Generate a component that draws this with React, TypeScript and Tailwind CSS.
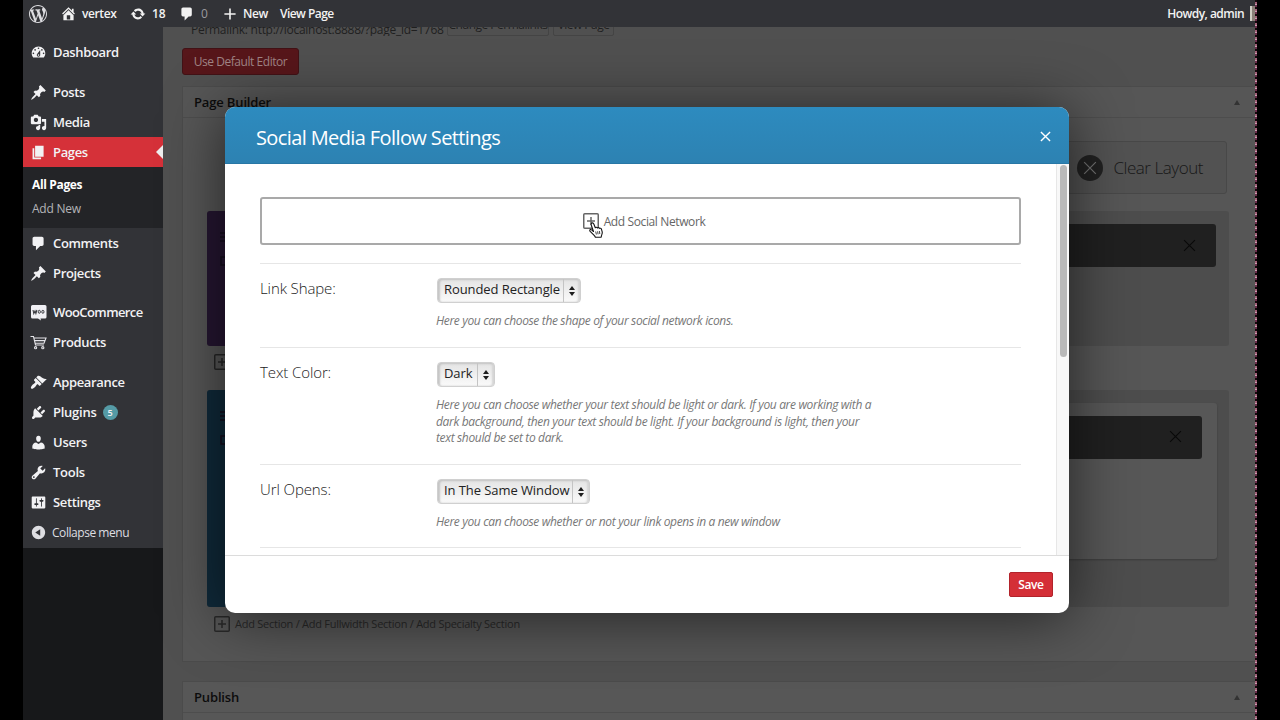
import type { ReactNode } from 'react';
import clsx from 'clsx';

// 20x20 admin icon glyphs
const icons = {
  wordpress:
    'M20 10c0-5.51-4.49-10-10-10C4.48 0 0 4.49 0 10c0 5.52 4.48 10 10 10 5.51 0 10-4.48 10-10zM7.78 15.37L4.37 6.22c.55-.02 1.17-.08 1.17-.08.5-.06.44-1.13-.06-1.11 0 0-1.45.11-2.37.11-.18 0-.37 0-.58-.01C4.12 2.69 6.87 1.11 10 1.11c2.33 0 4.45.87 6.05 2.34-.68-.11-1.65.39-1.65 1.58 0 .74.45 1.36.9 2.1.35.61.55 1.36.55 2.46 0 1.49-1.4 5-1.4 5l-3.03-8.37c.54-.02.82-.17.82-.17.5-.05.44-1.25-.06-1.22 0 0-1.44.12-2.38.12-.87 0-2.33-.12-2.33-.12-.5-.03-.56 1.2-.06 1.22l.92.08 1.26 3.41zM17.41 10c.24-.64.74-1.87.43-4.25.7 1.29 1.05 2.71 1.05 4.25 0 3.29-1.73 6.24-4.4 7.78.97-2.59 1.94-5.2 2.92-7.78zM6.1 18.09C3.12 16.65 1.11 13.53 1.11 10c0-1.3.23-2.48.72-3.59C3.25 10.3 4.67 14.2 6.1 18.09zm4.03-6.63l2.58 6.98c-.86.29-1.76.45-2.71.45-.79 0-1.57-.11-2.29-.33.81-2.38 1.62-4.74 2.42-7.1z',
  home: 'M16 8.5l1.53 1.53-1.06 1.06L10 4.6l-6.47 6.49-1.06-1.06L10 2.5l4 4v-2h2v4zm-6-2.46l6 5.99V18H4v-5.97zM12 17v-5H8v5h4z',
  update:
    'M10.2 3.28c3.53 0 6.43 2.61 6.92 6h2.08l-3.5 4-3.5-4h2.32c-.45-1.97-2.21-3.45-4.32-3.45-1.45 0-2.73.71-3.54 1.78L4.95 5.66C6.23 4.2 8.11 3.28 10.2 3.28zm-.4 13.44c-3.52 0-6.43-2.61-6.92-6H.8l3.5-4c1.17 1.33 2.33 2.67 3.5 4H5.48c.45 1.97 2.21 3.45 4.32 3.45 1.45 0 2.73-.71 3.54-1.78l1.71 1.95c-1.28 1.46-3.15 2.38-5.25 2.38z',
  plus: 'M17 9v2h-6v6H9v-6H3V9h6V3h2v6h6z',
  dashboard:
    'M3.76 16h12.48c1.1-1.37 1.76-3.11 1.76-5 0-4.42-3.58-8-8-8s-8 3.58-8 8c0 1.89.66 3.63 1.76 5zM10 4c.55 0 1 .45 1 1s-.45 1-1 1-1-.45-1-1 .45-1 1-1zM6 6c.55 0 1 .45 1 1s-.45 1-1 1-1-.45-1-1 .45-1 1-1zm8 0c.55 0 1 .45 1 1s-.45 1-1 1-1-.45-1-1 .45-1 1-1zm-5.37 5.55L12 7v6c0 1.1-.9 2-2 2s-2-.9-2-2c0-.57.24-1.08.63-1.45zM4 10c.55 0 1 .45 1 1s-.45 1-1 1-1-.45-1-1 .45-1 1-1zm12 0c.55 0 1 .45 1 1s-.45 1-1 1-1-.45-1-1 .45-1 1-1zm-5 3c0-.55-.45-1-1-1s-1 .45-1 1 .45 1 1 1 1-.45 1-1z',
  pin: 'M10.44 3.02l1.82-1.82 6.36 6.35-1.83 1.82c-1.05-.68-2.48-.57-3.41.36l-.75.75c-.92.93-1.04 2.35-.35 3.41l-1.83 1.82-2.41-2.41-2.8 2.79c-.42.42-3.38 2.71-3.8 2.29s1.86-3.39 2.28-3.81l2.79-2.79L4.1 9.36l1.83-1.82c1.05.69 2.48.57 3.4-.36l.75-.75c.93-.92 1.05-2.35.36-3.41z',
  media:
    'M13 11V4c0-.55-.45-1-1-1h-1.67L9 1H5L3.67 3H2c-.55 0-1 .45-1 1v7c0 .55.45 1 1 1h10c.55 0 1-.45 1-1zM7 4.5c1.38 0 2.5 1.12 2.5 2.5S8.38 9.5 7 9.5 4.5 8.38 4.5 7 5.62 4.5 7 4.5zM14 6h5v10.5c0 1.38-1.12 2.5-2.5 2.5S14 17.88 14 16.5s1.12-2.5 2.5-2.5c.17 0 .34.02.5.05V9h-3V6zm-4 8.05V13h2v3.5c0 1.38-1.12 2.5-2.5 2.5S7 17.88 7 16.5 8.12 14 9.5 14c.17 0 .34.02.5.05z',
  page: 'M6 15V2h10v13H6zm-1 1h8v2H3V5h2v11z',
  comment: 'M5 2h9c1.1 0 2 .9 2 2v7c0 1.1-.9 2-2 2h-2l-5 5v-5H5c-1.1 0-2-.9-2-2V4c0-1.1.9-2 2-2z',
  appearance:
    'M14.48 11.06L7.41 3.99l1.5-1.5c.5-.56 2.3-.47 3.51.32 1.21.8 1.43 1.28 2.91 2.1 1.18.64 2.45 1.26 4.45.85zm-.71.71L6.7 4.7 4.93 6.47c-.39.39-.39 1.02 0 1.41l1.06 1.06c.39.39.39 1.03 0 1.42-.6.6-1.43 1.11-2.21 1.69-.35.26-.7.53-1.01.84C1.43 14.23.4 16.08 1.4 17.07c.99 1 2.84-.03 4.18-1.36.31-.31.58-.66.85-1.02.57-.78 1.08-1.61 1.69-2.21.39-.39 1.02-.39 1.41 0l1.06 1.06c.39.39 1.02.39 1.41 0z',
  plugins:
    'M13.11 4.36L9.87 7.6 8 5.73l3.24-3.24c.35-.34 1.05-.2 1.56.32.52.51.66 1.21.31 1.55zm-8 1.77l.91-1.12 9.01 9.01-1.19.84c-.71.71-2.63 1.16-3.82 1.16H6.14L4.9 17.26c-.59.59-1.54.59-2.12 0-.59-.58-.59-1.53 0-2.12l1.24-1.24v-3.88c0-1.13.4-3.19 1.09-3.89zm7.26 3.97l3.24-3.24c.34-.35 1.04-.21 1.55.31.52.51.66 1.21.31 1.55l-3.24 3.25z',
  users:
    'M10 9.25c-2.27 0-2.73-3.44-2.73-3.44C7 4.02 7.82 2 9.97 2c2.16 0 2.98 2.02 2.71 3.81 0 0-.41 3.44-2.68 3.44zm0 2.57L12.72 10c2.39 0 4.52 2.33 4.52 4.53v2.49s-3.65 1.13-7.24 1.13c-3.65 0-7.24-1.13-7.24-1.13v-2.49c0-2.25 1.94-4.48 4.47-4.48z',
  tools:
    'M16.68 9.77c-1.34 1.34-3.3 1.67-4.95.99l-5.41 6.52c-.99.99-2.59.99-3.58 0s-.99-2.59 0-3.57l6.52-5.42c-.68-1.65-.35-3.61.99-4.95 1.28-1.28 3.12-1.62 4.72-1.06l-2.89 2.89 2.82 2.82 2.86-2.87c.53 1.58.18 3.39-1.08 4.65zM3.81 16.21c.4.39 1.04.39 1.43 0 .4-.4.4-1.04 0-1.43-.39-.4-1.03-.4-1.43 0-.39.39-.39 1.03 0 1.43z',
  settings:
    'M18 16V4c0-.55-.45-1-1-1H3c-.55 0-1 .45-1 1v12c0 .55.45 1 1 1h14c.55 0 1-.45 1-1zM8 11h1c.55 0 1 .45 1 1s-.45 1-1 1H8v1.5c0 .28-.22.5-.5.5s-.5-.22-.5-.5V13H6c-.55 0-1-.45-1-1s.45-1 1-1h1V5.5c0-.28.22-.5.5-.5s.5.22.5.5V11zm5-2h-1c-.55 0-1-.45-1-1s.45-1 1-1h1V5.5c0-.28.22-.5.5-.5s.5.22.5.5V7h1c.55 0 1 .45 1 1s-.45 1-1 1h-1v5.5c0 .28-.22.5-.5.5s-.5-.22-.5-.5V9z',
  collapse:
    'M10 2.16c4.33 0 7.84 3.51 7.84 7.84s-3.51 7.84-7.84 7.84S2.16 14.33 2.16 10 5.71 2.16 10 2.16zm2 11.72V6.12L6.18 9.97z',
};

type IconName = keyof typeof icons;

function Icon({ name, className = 'w-[17px] h-[17px]' }: { name: IconName; className?: string }) {
  return (
    <svg viewBox="0 0 20 20" className={clsx('shrink-0', className)} fill="currentColor">
      <path d={icons[name]} fillRule={name === 'dashboard' ? 'evenodd' : undefined} />
    </svg>
  );
}

function WooIcon() {
  return (
    <svg viewBox="0 0 17 17" className="w-[17px] h-[17px] shrink-0">
      <path d="M2.500 1h12.500q1.500 0 1.500 1.500V13q0 1.500-1.500 1.500h-4.500l.5 2-3-2H2.500Q1 14.500 1 13V2.500Q1 1 2.500 1z" fill="#f0f0f4" />
      <path d="M3 6l.8 3.500L5 7l.9 2.500 1-3.500" fill="none" stroke="#3c3d42" strokeWidth="1.100" />
      <ellipse cx="9.300" cy="7.800" rx="1.100" ry="1.500" fill="none" stroke="#3c3d42" />
      <ellipse cx="12.900" cy="7.800" rx="1.100" ry="1.500" fill="none" stroke="#3c3d42" />
    </svg>
  );
}

function CartIcon() {
  return (
    <svg viewBox="0 0 17 17" className="w-[17px] h-[17px] shrink-0" fill="none" stroke="#e4e4e8" strokeWidth="1.100">
      <path d="M.5 2.500h3l2 8.500h8.500M4 4h12l-2 5.200H5M4.500 6.600h10.300" />
      <circle cx="5.600" cy="13.700" r="1.100" />
      <circle cx="12.800" cy="13.700" r="1.100" />
    </svg>
  );
}

function SquarePlus({ className }: { className?: string }) {
  return (
    <svg viewBox="0 0 16 16" className={clsx('w-4 h-4 shrink-0', className)} fill="none" stroke="currentColor" strokeWidth="1.500">
      <rect x=".75" y=".75" width="14.500" height="14.500" rx="1" />
      <path d="M8 4v8M4 8h8" />
    </svg>
  );
}

function Cross({ className, weight = 1 }: { className?: string; weight?: number }) {
  return (
    <svg viewBox="0 0 12 12" className={clsx('shrink-0', className)} fill="none" stroke="currentColor" strokeWidth={weight}>
      <path d="M1 1l10 10M11 1L1 11" />
    </svg>
  );
}

function HandCursor() {
  return (
    <svg viewBox="0 0 14 16" className="absolute left-[6px] top-[9px] w-[14px] h-4">
      <path
        d="M4.500 9.500L2.300 3.200C1.900 2 2.300 1.100 3.100.9c.8-.2 1.400.3 1.800 1.300l1.400 3.600c.1-.7 1.900-.9 2.200.2.300-.6 1.900-.6 2.100.5.4-.5 1.700-.3 1.900.8l.7 2.600c.3 1.500-.2 2.400-.7 3.600l-.3 1.700H6.400c-.5-1.300-1.500-2-2.500-3.100L1.200 9.400C.5 8.600.7 7.900 1.300 7.600c.8-.4 1.500.2 3.200 1.900z"
        fill="#fff"
        stroke="#151515"
        strokeWidth="1.100"
        strokeLinejoin="round"
      />
      <path d="M6.700 9.500l.7 3M8.600 9.300l.5 3M10.400 9l.4 3" stroke="#151515" strokeWidth=".8" />
    </svg>
  );
}

function AdminBar() {
  return (
    <header className="h-[27px] shrink-0 bg-[#323337] flex items-center text-[12px] font-semibold tracking-[-0.4px] text-[#f2f2f2] whitespace-nowrap">
      <Icon name="wordpress" className="w-[18px] h-[18px] ml-[6px] text-[#dcdcdf]" />
      <Icon name="home" className="w-[17px] h-[17px] ml-[13px]" />
      <span className="ml-[5px] w-[35px]">vertex</span>
      <Icon name="update" className="w-4 h-4 ml-[13px]" />
      <span className="ml-[6px] w-[14px] tracking-[-0.2px]">18</span>
      <Icon name="comment" className="w-4 h-4 ml-[13px]" />
      <span className="ml-[6px] w-2 font-normal text-[#9a9a9e]">0</span>
      <Icon name="plus" className="w-4 h-4 ml-[13px]" />
      <span className="ml-[5px] w-[25px]">New</span>
      <span className="ml-[12px] tracking-[-0.55px]">View Page</span>
      <span className="ml-auto tracking-[-0.55px]">Howdy, admin</span>
      <span className="ml-[6px] w-[5px] h-[15px] bg-[#8a7f78] border-l-2 border-[#cfcdc4]" />
    </header>
  );
}

interface MenuItemProps {
  icon: ReactNode;
  label: string;
  labelClass?: string;
  active?: boolean;
  badge?: string;
}

function MenuItem({ icon, label, labelClass = 'tracking-[-0.35px]', active, badge }: MenuItemProps) {
  return (
    <div className={clsx('relative h-[30px] flex items-center pt-[1px] pl-[7px]', active && 'bg-[#d53139]')}>
      {icon}
      <span className={clsx('ml-[6px]', labelClass)}>{label}</span>
      {badge && (
        <span className="ml-[6px] w-[15px] h-[15px] rounded-full bg-[#559ba6] text-[9px] leading-[15px] text-center">{badge}</span>
      )}
      {active && (
        <span className="absolute right-0 top-2 border-y-[7px] border-y-transparent border-r-[7px] border-r-[#eee]" />
      )}
    </div>
  );
}

function Sidebar() {
  return (
    <aside className="w-[140px] shrink-0 bg-[#17181a] text-[13px] font-semibold text-[#f2f2f4]">
      <nav className="h-[521px] bg-[#323337] pt-[10px]">
        <MenuItem icon={<Icon name="dashboard" />} label="Dashboard" />
        <div className="h-[10px]" />
        <MenuItem icon={<Icon name="pin" />} label="Posts" />
        <MenuItem icon={<Icon name="media" />} label="Media" />
        <MenuItem icon={<Icon name="page" />} label="Pages" active />
        <div className="h-[61px] bg-[#232427] pl-[9px] pt-[6px] text-[12px] leading-6 tracking-[-0.35px]">
          <div className="font-bold text-white">All Pages</div>
          <div className="font-normal text-[#b4b4b8] tracking-[-0.25px]">Add New</div>
        </div>
        <MenuItem icon={<Icon name="comment" />} label="Comments" />
        <MenuItem icon={<Icon name="pin" />} label="Projects" />
        <div className="h-[9px]" />
        <MenuItem icon={<WooIcon />} label="WooCommerce" labelClass="tracking-[-0.6px]" />
        <MenuItem icon={<CartIcon />} label="Products" />
        <div className="h-[10px]" />
        <MenuItem icon={<Icon name="appearance" />} label="Appearance" />
        <MenuItem icon={<Icon name="plugins" />} label="Plugins" labelClass="tracking-[-0.25px]" badge="5" />
        <MenuItem icon={<Icon name="users" />} label="Users" labelClass="tracking-[-0.25px]" />
        <MenuItem icon={<Icon name="tools" />} label="Tools" labelClass="tracking-[-0.25px]" />
        <MenuItem icon={<Icon name="settings" />} label="Settings" />
        <div className="h-[30px] flex items-center pl-[7px] pt-[1px] gap-[5px] text-[12px] font-medium tracking-[-0.45px] text-[#dedee2]">
          <Icon name="collapse" />
          Collapse menu
        </div>
      </nav>
    </aside>
  );
}

function PanelHeader({ title }: { title: string }) {
  return (
    <div className="h-[31px] border-b border-[#4d4d4d] flex items-center justify-between pl-[11px] pr-[15px]">
      <h2 className="pt-[2px] text-[13px] font-semibold tracking-[-0.15px] text-[#0c0c0c]">{title}</h2>
      <span className="border-x-[3px] border-x-transparent border-b-[5px] border-b-[#333]" />
    </div>
  );
}

function SectionHandle({ className }: { className: string }) {
  return (
    <div className={clsx('w-[60px] shrink-0 rounded-l-[3px] pt-5 pl-[13px] text-[#140d1c]', className)}>
      <svg viewBox="0 0 12 36" className="w-3 h-9" fill="none" stroke="currentColor" strokeWidth="1.500">
        <path d="M0 2h12M0 6h12M0 10h12" />
        <rect x="1" y="26" width="10" height="8" />
      </svg>
    </div>
  );
}

// Page builder as it shows under the dark overlay
function PageBuilder() {
  return (
    <main className="flex-1 min-w-0 bg-[#505050] pl-[19px] overflow-hidden">
      <div className="h-[9px] overflow-hidden flex items-end text-[12px] text-[#1f1f1f] leading-[16px] pl-[9px] whitespace-nowrap">
        <span className="w-[254px] mb-[-2px] tracking-[-0.28px]">Permalink: http://localhost:8888/?page_id=1768</span>
        <span className="ml-[2px] w-[102px] h-5 rounded-[2px] border border-[#444] text-center leading-[15px] tracking-[-0.5px]">Change Permalinks</span>
        <span className="ml-[4px] w-[61px] h-5 rounded-[2px] border border-[#444] text-center leading-[15px] tracking-[-0.5px]">View Page</span>
      </div>
      <button className="block mt-[12px] w-[117px] h-[27px] rounded-[3px] bg-[#57161a] border border-[#421216] text-[12px] font-medium tracking-[-0.45px] text-[#a08485]">
        Use Default Editor
      </button>

      <section className="mt-[11px] h-[576px] bg-[#565656] border border-r-0 border-[#4b4b4b]">
        <PanelHeader title="Page Builder" />
        <div className="pl-6 pr-[26px]">
          <div className="mt-[23px] ml-auto mr-[2px] w-[260px] h-[53px] rounded-[3px] border border-[#484848] bg-[#525252] flex items-center justify-end pr-[23px] text-[17px] font-light tracking-[-0.45px] text-[#181818]">
            <span className="w-[26px] h-[26px] rounded-full bg-[#212121] flex items-center justify-center mr-[10px]">
              <Cross className="w-[14px] h-[14px] text-[#727272]" />
            </span>
            Clear Layout
          </div>

          <div className="mt-[17px] h-[135px] flex rounded-[3px] bg-[#4d4d4d]">
            <SectionHandle className="bg-[#251631]" />
            <div className="flex-1 pt-[13px] pr-[13px]">
              <div className="h-[43px] rounded-[3px] bg-[#202020] flex items-center justify-end pr-5">
                <Cross className="w-[13px] h-[13px] text-[#090909]" />
              </div>
            </div>
          </div>
          <SquarePlus className="mt-[8px] ml-[7px] text-[#262626]" />

          <div className="mt-[20px] h-[217px] flex rounded-[3px] bg-[#4d4d4d]">
            <SectionHandle className="bg-[#102a3a]" />
            <div className="flex-1 py-[13px] pr-3">
              <div className="h-[156px] rounded-[3px] bg-[#575757] shadow-[0_1px_2px_#3c3c3c] pt-[13px] pr-[15px]">
                <div className="h-[43px] rounded-[3px] bg-[#202020] flex items-center justify-end pr-5 pb-[3px]">
                  <Cross className="w-[13px] h-[13px] text-[#090909]" />
                </div>
              </div>
            </div>
          </div>
          <div className="mt-[8px] ml-[7px] flex items-center gap-[5px] text-[11px] leading-4 tracking-[-0.25px] text-[#292929]">
            <SquarePlus />
            <span className="pt-[1px]">Add Section / Add Fullwidth Section / Add Specialty Section</span>
          </div>
        </div>
      </section>

      <section className="mt-[19px] h-[60px] bg-[#575757] border border-r-0 border-[#4b4b4b]">
        <PanelHeader title="Publish" />
      </section>
    </main>
  );
}

function SelectBox({ value, className }: { value: string; className: string }) {
  return (
    <div
      className={clsx(
        'h-[25px] rounded-[4px] border border-[#d0d0d0] bg-linear-to-b from-[#e4e4e4] to-[#fafafa] flex items-center shadow-[inset_2px_1px_2px_#c4c4c4,inset_-2px_0_2px_#d4d4d4] text-[13px] tracking-[-0.08px] text-[#222]',
        className,
      )}
    >
      <span className="flex-1 pl-[6px] pb-[1px] whitespace-nowrap">{value}</span>
      <span className="h-full w-[17px] border-l border-[#c4c4c4] flex items-center justify-center">
        <svg viewBox="0 0 6 10" className="w-[6px] h-[10px]" fill="#1d1d1d">
          <path d="M3 0l3 4H0zM3 10L0 6h6z" />
        </svg>
      </span>
    </div>
  );
}

interface SettingRowProps {
  label: string;
  value: string;
  selectWidth: string;
  className: string;
  children: ReactNode;
}

function SettingRow({ label, value, selectWidth, className, children }: SettingRowProps) {
  return (
    <div className={clsx('border-t border-[#e6e6e6] flex pt-[14px]', className)}>
      <div className="w-[176px] shrink-0 text-[15px] leading-[21px] font-light tracking-[-0.1px] text-[#222]">{label}</div>
      <div>
        <SelectBox value={value} className={clsx('ml-[1px]', selectWidth)} />
        <p className="mt-[10px] text-[12px] leading-[16.700px] italic tracking-[-0.345px] text-[#777] whitespace-nowrap">{children}</p>
      </div>
    </div>
  );
}

function SettingsModal() {
  return (
    <div className="absolute left-[225px] top-[107px] w-[844px] h-[506px] rounded-[10px] bg-white shadow-[0_4px_60px_rgba(0,0,0,0.6)] flex flex-col overflow-hidden">
      <div className="h-[57px] shrink-0 bg-linear-to-b from-[#2d8bbf] to-[#2d82b2] border-b border-[#2877a5] flex items-center justify-between pl-[31px] pr-[18px] text-white">
        <h1 className="text-[20px] leading-7 mt-[5px] tracking-[-0.61px]">Social Media Follow Settings</h1>
        <Cross className="w-[11px] h-[11px] mt-[2px]" weight={1.5} />
      </div>

      <div className="h-[391px] flex overflow-hidden">
        <div className="flex-1 pl-[35px] pr-[35px] pt-[33px]">
          <div className="h-[48px] mb-[18px] rounded-[3px] border-2 border-[#a9a9a9] flex items-center justify-center gap-[5px] pl-[7px] text-[12px] font-medium tracking-[-0.38px] text-[#666]">
            <span className="relative">
              <SquarePlus />
              <HandCursor />
            </span>
            <span className="pt-[1px]">Add Social Network</span>
          </div>
          <SettingRow label="Link Shape:" value="Rounded Rectangle" selectWidth="w-[144px]" className="h-[84px]">
            Here you can choose the shape of your social network icons.
          </SettingRow>
          <SettingRow label="Text Color:" value="Dark" selectWidth="w-[58px]" className="h-[117px]">
            Here you can choose whether your text should be light or dark. If you are working with a<br />
            dark background, then your text should be light. If your background is light, then your<br />
            text should be set to dark.
          </SettingRow>
          <SettingRow label="Url Opens:" value="In The Same Window" selectWidth="w-[153px]" className="h-[83px]">
            Here you can choose whether or not your link opens in a new window
          </SettingRow>
          <div className="border-t border-[#e6e6e6]" />
        </div>
        <div className="w-[13px] bg-[#f8f8f8] border-l border-[#e7e7e7] pt-[1px] pl-[3px]">
          <div className="w-[7px] h-[192px] rounded-full bg-[#b9b9b9]" />
        </div>
      </div>

      <div className="flex-1 border-t border-[#dcdcdc] flex items-start justify-end pt-4 pr-4">
        <button className="w-[44px] h-[25px] rounded-[2px] bg-[#d42f37] border border-[#b2232b] text-[12px] font-semibold tracking-[-0.4px] text-white">Save</button>
      </div>
    </div>
  );
}

export default function App() {
  return (
    <div className="relative w-[1280px] h-[720px] bg-black pl-[23px] pr-[23px] flex overflow-hidden font-['Open_Sans',sans-serif]">
      <div className="flex-1 min-w-0 flex flex-col">
        <AdminBar />
        <div className="flex-1 min-h-0 flex">
          <Sidebar />
          <PageBuilder />
        </div>
      </div>
      <div className="w-[2px] shrink-0 bg-[repeating-linear-gradient(#14080c_0_2px,#a26078_2px_4px,#c4a0ac_4px_5px,#6d2d4c_5px_7px)]" />
      <SettingsModal />
    </div>
  );
}
